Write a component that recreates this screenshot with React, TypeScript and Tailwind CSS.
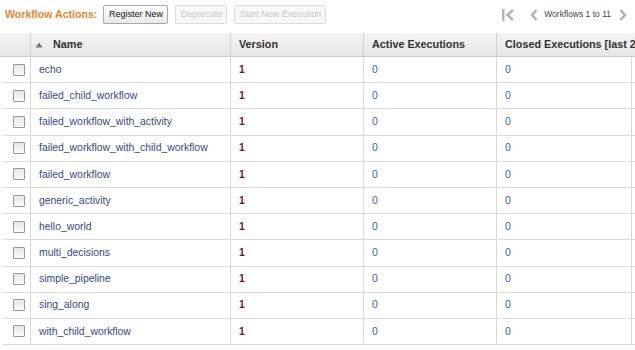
import React from "react";

const names = [
  "echo",
  "failed_child_workflow",
  "failed_workflow_with_activity",
  "failed_workflow_with_child_workflow",
  "failed_workflow",
  "generic_activity",
  "hello_world",
  "multi_decisions",
  "simple_pipeline",
  "sing_along",
  "with_child_workflow",
];

function Checkbox() {
  return (
    <div className="w-[12px] h-[12px] border border-[#9a9a9a] bg-gradient-to-b from-[#e6e6e6] to-[#fafafa] rounded-[1px]" />
  );
}

export default function App() {
  return (
    <div
      className="w-[635px] h-[350px] bg-white overflow-hidden"
      style={{ fontFamily: '"Liberation Sans", Arial, sans-serif' }}
    >
      <div className="flex items-center h-[33px] pb-[4px] pl-[5px] pr-[8px]">
        <span className="text-[#e8852a] font-bold text-[10.6px] mr-[6px]">Workflow Actions:</span>
        <button className="h-[19px] w-[65px] border border-[#a8a8a8] rounded-[2px] bg-gradient-to-b from-white to-[#e9e9e9] text-[9px] text-[#111] leading-none">
          Register New
        </button>
        <button className="ml-[7px] h-[19px] w-[52px] border border-[#dcdcdc] rounded-[2px] bg-[#f7f7f7] text-[9px] text-[#c8c8c8] leading-none">
          Deprecate
        </button>
        <button className="ml-[7px] h-[19px] w-[92px] border border-[#dcdcdc] rounded-[2px] bg-[#f7f7f7] text-[9px] text-[#c8c8c8] leading-none">
          Start New Execution
        </button>
        <div className="ml-auto flex items-center">
          <svg width="14" height="12" viewBox="0 0 14 12" className="mr-[14px]">
            <rect x="0" y="0" width="2.5" height="12" fill="#b3b3b3" />
            <path d="M11 1 L5.5 6 L11 11" stroke="#b3b3b3" strokeWidth="2.6" fill="none" />
          </svg>
          <svg width="8" height="12" viewBox="0 0 8 12" className="mr-[6px]">
            <path d="M6.5 1 L2 6 L6.5 11" stroke="#b3b3b3" strokeWidth="2.6" fill="none" />
          </svg>
          <span className="text-[8.5px] text-[#444]">Workflows 1 to 11</span>
          <svg width="8" height="12" viewBox="0 0 8 12" className="ml-[8px]">
            <path d="M1.5 1 L6 6 L1.5 11" stroke="#b3b3b3" strokeWidth="2.6" fill="none" />
          </svg>
        </div>
      </div>

      <div className="w-[700px]">
        <div className="flex h-[24px] bg-gradient-to-b from-[#f4f4f4] to-[#e6e6e6] border-b border-[#c9c9c9] text-[10.8px] font-bold text-[#333]">
          <div className="w-[31px] border-r border-[#d0d0d0]" />
          <div className="w-[200px] border-r border-[#d0d0d0] flex items-center pl-[4px]">
            <svg width="8" height="6" viewBox="0 0 8 6" className="mr-[10px]">
              <path d="M0.5 5.5 L4 0.5 L7.5 5.5 Z" fill="#777" />
            </svg>
            Name
          </div>
          <div className="w-[133px] border-r border-[#d0d0d0] flex items-center pl-[8px]">Version</div>
          <div className="w-[133px] border-r border-[#d0d0d0] flex items-center pl-[8px]">Active Executions</div>
          <div className="flex-1 flex items-center pl-[8px] whitespace-nowrap">Closed Executions [last 24 hours]</div>
        </div>
        {names.map((n) => (
          <div key={n} className="flex h-[26.2px] ml-[3px] border-b border-[#dcdcdc] text-[10.4px]">
            <div className="w-[28px] border-r border-[#d8d8d8] flex items-center pl-[10px]">
              <Checkbox />
            </div>
            <div className="w-[200px] border-r border-[#d8d8d8] flex items-center pl-[8px] text-[#34498a]">{n}</div>
            <div className="w-[133px] border-r border-[#d8d8d8] flex items-center pl-[8px] text-[#6e1a2e] font-bold">1</div>
            <div className="w-[133px] border-r border-[#d8d8d8] flex items-center pl-[8px] text-[#2e67b8]">0</div>
            <div className="w-[135px] border-r border-[#d8d8d8] flex items-center pl-[8px] text-[#2e67b8]">0</div>
          </div>
        ))}
      </div>
    </div>
  );
}
